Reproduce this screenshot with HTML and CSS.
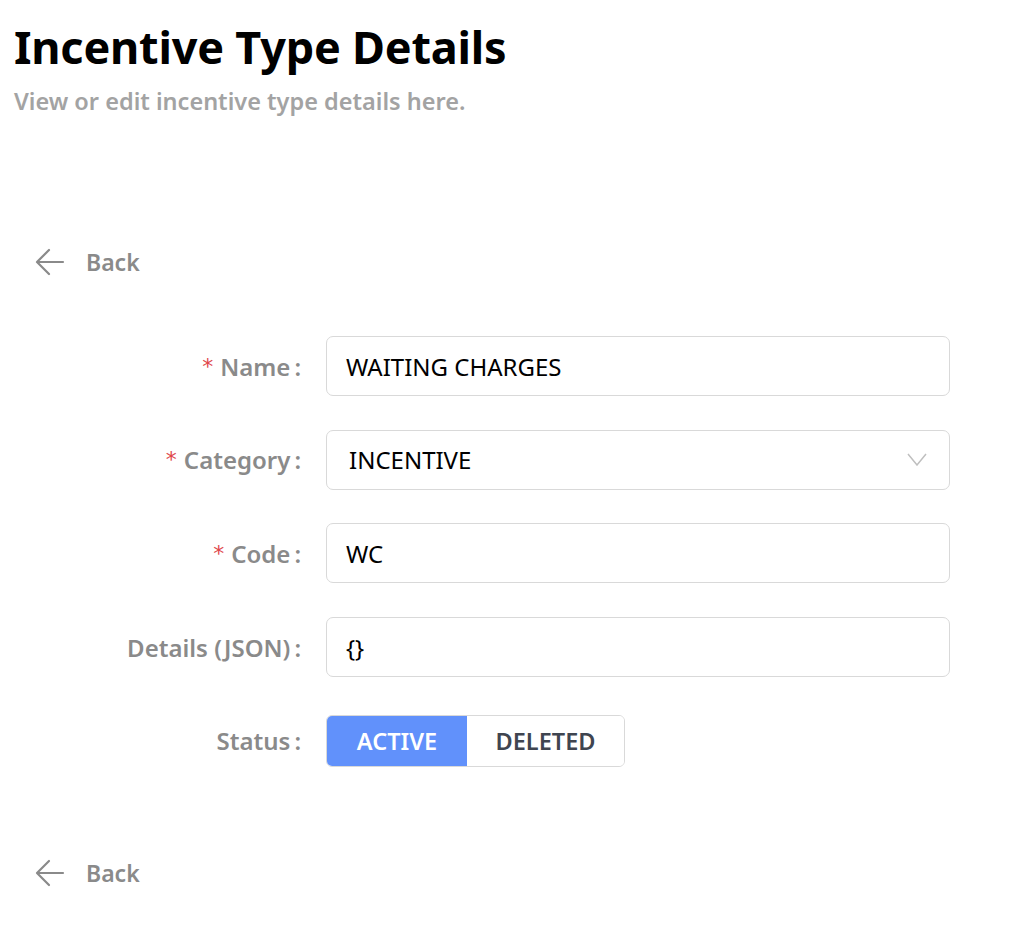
FILE: index.html
```html
<!DOCTYPE html>
<html>
<head>
<meta charset="utf-8">
<link rel="stylesheet" href="styles.css">
</head>
<body>
<div class="page">
  <header class="header">
    <h1 class="title">Incentive Type Details</h1>
    <p class="subtitle">View or edit incentive type details here.</p>
  </header>

  <a class="back back-top" href="#">
    <svg class="back-icon" width="30" height="28" viewBox="0 0 30 28" fill="none" stroke="#8a8a8a" stroke-width="2.2" stroke-linecap="round" stroke-linejoin="round"><path d="M28 14H3M14 2L2 14l12 12"/></svg>
    <span>Back</span>
  </a>

  <form class="form">
    <div class="row">
      <label class="label"><span class="req">*</span>Name<span class="colon">:</span></label>
      <div class="control"><div class="input">WAITING CHARGES</div></div>
    </div>
    <div class="row">
      <label class="label"><span class="req">*</span>Category<span class="colon">:</span></label>
      <div class="control"><div class="input select"><span class="sel-text">INCENTIVE</span>
        <svg class="chev" width="20" height="13" viewBox="0 0 20 13" fill="none" stroke="#bfbfbf" stroke-width="1.5"><path d="M1 1l9 11 9-11"/></svg></div></div>
    </div>
    <div class="row">
      <label class="label"><span class="req">*</span>Code<span class="colon">:</span></label>
      <div class="control"><div class="input">WC</div></div>
    </div>
    <div class="row">
      <label class="label">Details (JSON)<span class="colon">:</span></label>
      <div class="control"><div class="input">{}</div></div>
    </div>
    <div class="row row-status">
      <label class="label">Status<span class="colon">:</span></label>
      <div class="control">
        <div class="seg">
          <span class="seg-btn active">ACTIVE</span>
          <span class="seg-btn">DELETED</span>
        </div>
      </div>
    </div>
  </form>

  <a class="back back-bottom" href="#">
    <svg class="back-icon" width="30" height="28" viewBox="0 0 30 28" fill="none" stroke="#8a8a8a" stroke-width="2.2" stroke-linecap="round" stroke-linejoin="round"><path d="M28 14H3M14 2L2 14l12 12"/></svg>
    <span>Back</span>
  </a>
</div>
</body>
</html>
```

FILE: styles.css
```css
* { box-sizing: border-box; }
html, body { margin: 0; padding: 0; background: #fff; }
body {
  font-family: "Noto Sans", "Open Sans", "Liberation Sans", sans-serif;
  color: #000;
}
.page {
  padding: 19px 14px 0 14px;
}
.title {
  margin: 0;
  font-size: 45px;
  line-height: 56px;
  font-weight: 700;
  color: #000;
  letter-spacing: -0.2px;
}
.subtitle {
  margin: 12px 0 0 0;
  font-size: 23.5px;
  line-height: 28px;
  font-weight: 600;
  color: #a3a3a3;
}
.back {
  display: flex;
  align-items: center;
  gap: 21px;
  margin-left: 21px;
  text-decoration: none;
  color: #8a8a8a;
  font-size: 23px;
  font-weight: 600;
  height: 40px;
}
.back-top { margin-top: 127px; }
.back-bottom { margin-top: 86px; }
.form {
  margin-top: 54px;
  display: flex;
  flex-direction: column;
  gap: 33.7px;
}
.row {
  display: flex;
  align-items: center;
}
.label {
  width: 312px;
  padding-right: 25px;
  flex: none;
  display: flex;
  justify-content: flex-end;
  align-items: center;
  font-size: 24px;
  font-weight: 600;
  color: #8a8a8a;
}
.req {
  color: #e0474b;
  font-weight: 400;
  margin-right: 7px;
  font-family: "DejaVu Sans", sans-serif;
  font-size: 22px;
}
.colon { margin-left: 4px; }
.control { width: 624px; }
.input {
  height: 60px;
  border: 1px solid #d9d9d9;
  border-radius: 7px;
  padding: 0 19px;
  display: flex;
  align-items: center;
  font-size: 24px;
  color: #000;
}
.select {
  justify-content: space-between;
  padding-left: 22px;
  padding-right: 22px;
}
.chev { flex: none; }
.row-status { margin-top: 4px; }
.seg {
  display: inline-flex;
  height: 52px;
  border: 1px solid #d9d9d9;
  border-radius: 6px;
  overflow: hidden;
}
.seg-btn {
  display: flex;
  align-items: center;
  justify-content: center;
  font-size: 23.5px;
  font-weight: 600;
  color: #3f4550;
  background: #fff;
}
.seg-btn.active {
  background: #6191fb;
  color: #fff;
  width: 140px;
}
.seg-btn:not(.active) { width: 157px; }
```
